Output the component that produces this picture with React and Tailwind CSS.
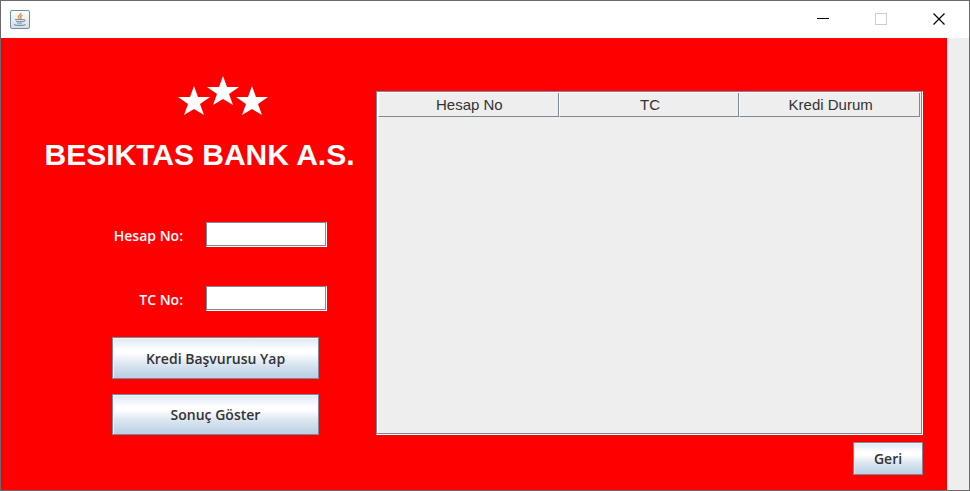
const star = "0,-16 4,-5 16,-5 6,2 10,13 0,7 -10,13 -6,2 -16,-5 -4,-5";

const buttonStyle =
  "border border-[#7a8a99] bg-[linear-gradient(to_bottom,#dde8f3_0%,#ffffff_30%,#ffffff_38%,#dbe6f0_65%,#b8cfe5_100%)] pt-px font-semibold text-[#333333] shadow-[inset_1px_1px_0_#eef3f8]";

const fieldStyle =
  "h-[25px] w-[121px] border border-t-[#7a8a99] border-l-[#7a8a99] border-r-white border-b-white bg-white px-1 text-[#333333] shadow-[inset_-1px_-1px_0_#7a8a99] outline-none";

function JavaIcon() {
  return (
    <svg width="20" height="19" viewBox="0 0 20 19" fill="none" aria-hidden="true">
      <defs>
        <linearGradient id="tile" x1="0" y1="0" x2="0" y2="1">
          <stop offset="0" stopColor="#ffffff" />
          <stop offset="1" stopColor="#d5dde3" />
        </linearGradient>
      </defs>
      <rect x="0.5" y="0.5" width="19" height="18" rx="1.5" fill="url(#tile)" stroke="#6f8fa5" />
      <path d="M10.8 3c1 2-3.300 2.300-2.500 4.300.3.700.8 1 1.200 1.500M12.300 5.300c-2 .9-2.300 1.700-1.500 2.500.4.500.1 1-.4 1.200" stroke="#e5953f" strokeWidth="1.400" />
      <path d="M5 9.600h8.500M6 11.200c1 .5 6 .5 7 0M7 12.800c1.500.5 4 .5 5 0M13.500 9.600c2.300-.4 2 1.900-.5 2.300" stroke="#6f8ba6" strokeWidth="1" />
      <path d="M4 14.500c2 1.300 9.500 1.200 11.500 0" stroke="#6f8ba6" strokeWidth="1.200" />
    </svg>
  );
}

function TitleBar() {
  return (
    <header className="flex h-[37px] items-center justify-between bg-white pr-6 pl-[9px]">
      <JavaIcon />
      <div className="flex items-center gap-[46px] pb-px">
        <button aria-label="Minimize" className="size-3">
          <svg width="12" height="12" viewBox="0 0 12 12" aria-hidden="true">
            <path d="M0 5.500h12" stroke="#000" />
          </svg>
        </button>
        <button aria-label="Maximize" disabled className="size-3">
          <svg width="12" height="12" viewBox="0 0 12 12" fill="none" aria-hidden="true">
            <rect x="0.500" y="0.500" width="11" height="11" stroke="#cccccc" />
          </svg>
        </button>
        <button aria-label="Close" className="size-3">
          <svg width="12" height="12" viewBox="0 0 12 12" aria-hidden="true">
            <path d="M0.500 0.500l11 11M11.500 0.500l-11 11" stroke="#000" strokeWidth="1.200" />
          </svg>
        </button>
      </div>
    </header>
  );
}

function Field({ id, label }) {
  return (
    <div className="flex items-center">
      <label htmlFor={id} className="w-[182px] pt-[3px] text-right font-semibold text-white">
        {label}
      </label>
      <input id={id} type="text" className={`ml-[23px] ${fieldStyle}`} />
    </div>
  );
}

function ResultsTable() {
  return (
    <div className="h-[344px] border border-t-[#7a8a99] border-l-[#7a8a99] border-r-white border-b-white bg-[#eeeeee] p-px pr-[2px] shadow-[inset_-1px_-1px_0_#7a8a99,inset_1px_1px_0_#ffffff]">
      <table className="w-full table-fixed border-separate border-spacing-0 font-['Liberation_Sans',Arial,sans-serif] text-[15px] leading-[23px] text-[#333333]">
        <thead>
          <tr>
            {["Hesap No", "TC", "Kredi Durum"].map((name) => (
              <th
                key={name}
                scope="col"
                className="border-r border-b border-l border-r-[#7a8a99] border-b-[#7a8a99] border-l-white p-0 pl-[2px] text-center font-normal"
              >
                {name}
              </th>
            ))}
          </tr>
        </thead>
        <tbody />
      </table>
    </div>
  );
}

export default function App() {
  return (
    <div className="flex min-h-screen flex-col border border-[#6b6b6b] bg-[#eeeeee] font-['Open_Sans','Noto_Sans',sans-serif] text-sm">
      <TitleBar />
      <main className="mr-[22px] flex grow bg-[#ff0000] pr-6">
        <form className="w-[375px] shrink-0 pt-[38px]" onSubmit={(e) => e.preventDefault()}>
          <svg width="92" height="40" viewBox="0 0 92 40" fill="#fff" className="ml-[176px]" aria-hidden="true">
            <polygon points={star} transform="translate(17 26)" />
            <polygon points={star} transform="translate(46 16)" />
            <polygon points={star} transform="translate(75 26)" />
          </svg>
          <h1 className="mt-[19px] pl-[22px] text-center font-['Liberation_Sans',Arial,sans-serif] text-[30px] leading-10 font-bold whitespace-nowrap text-white">
            BESIKTAS BANK A.S.
          </h1>
          <div className="mt-[47px] flex flex-col gap-[39px]">
            <Field id="hesap" label="Hesap No:" />
            <Field id="tc" label="TC No:" />
          </div>
          <div className="mt-[26px] ml-[111px] flex w-[207px] flex-col gap-[15px]">
            <button type="submit" className={`h-[42px] ${buttonStyle}`}>
              Kredi Başvurusu Yap
            </button>
            <button type="button" className={`h-[41px] ${buttonStyle}`}>
              Sonuç Göster
            </button>
          </div>
        </form>
        <section className="flex min-w-0 grow flex-col pt-[53px]">
          <ResultsTable />
          <button type="button" className={`mt-[7px] h-[33px] w-[70px] self-end ${buttonStyle}`}>
            Geri
          </button>
        </section>
      </main>
    </div>
  );
}
